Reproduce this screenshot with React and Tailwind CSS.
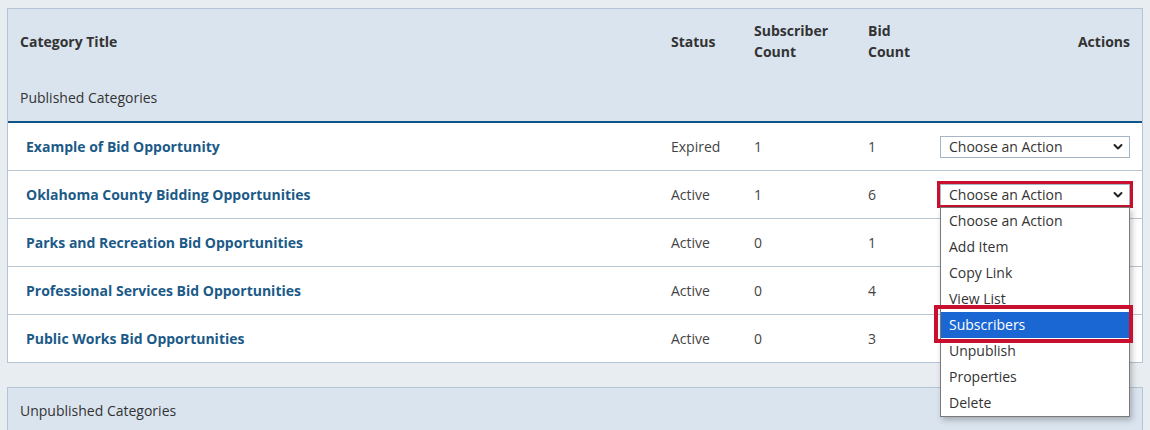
import { useState } from "react";

const rows = [
  { title: "Example of Bid Opportunity", status: "Expired", subs: 1, bids: 1 },
  { title: "Oklahoma County Bidding Opportunities", status: "Active", subs: 1, bids: 6, open: true },
  { title: "Parks and Recreation Bid Opportunities", status: "Active", subs: 0, bids: 1 },
  { title: "Professional Services Bid Opportunities", status: "Active", subs: 0, bids: 4 },
  { title: "Public Works Bid Opportunities", status: "Active", subs: 0, bids: 3 },
];

const actions = [
  "Choose an Action",
  "Add Item",
  "Copy Link",
  "View List",
  "Subscribers",
  "Unpublish",
  "Properties",
  "Delete",
];

const cols = "grid grid-cols-[663px_83px_114px_72px_1fr]";

function Chevron() {
  return (
    <svg width="10" height="8" viewBox="0 0 10 8" className="shrink-0">
      <path d="M1.5 2 L5 5.5 L8.5 2" fill="none" stroke="#222" strokeWidth="2" strokeLinecap="round" strokeLinejoin="round" />
    </svg>
  );
}

/* fake <select> so the open list can be drawn */
function ActionSelect({ open }) {
  const [hover] = useState("Subscribers");

  return (
    <div className="relative w-[190px]">
      {open && (
        <div className="pointer-events-none absolute -left-[3px] -right-[3px] -top-[3px] -bottom-[2px] border-[3px] border-[#c8102e]" />
      )}
      <div className="flex h-[22px] items-center justify-between border border-[#a7b6c7] bg-white pl-2 pr-[6px] text-[14px] text-[#333]">
        <span>Choose an Action</span>
        <Chevron />
      </div>

      {open && (
        <div className="absolute left-0 top-[23px] z-20 w-[190px] border border-[#7a7a7a] bg-white shadow-[2px_3px_6px_rgba(0,0,0,0.25)]">
          {actions.map((a) => (
            <div key={a} className="relative">
              <div
                className={
                  a === hover
                    ? "flex h-[26px] items-center bg-[#1a67d3] pl-2 text-[14px] text-white"
                    : "flex h-[26px] items-center pl-2 text-[14px] text-[#333]"
                }
              >
                {a}
              </div>
              {a === hover && (
                <div className="absolute -left-[7px] -right-[4px] -top-[7px] -bottom-[5px] border-4 border-[#c8102e]" />
              )}
            </div>
          ))}
        </div>
      )}
    </div>
  );
}

export default function App() {
  return (
    <div
      className="min-h-[430px] bg-[#e8edf2] px-[7px] pt-[8px]"
      style={{ fontFamily: '"Open Sans", "Noto Sans", sans-serif' }}
    >
      {/* published */}
      <div className="border border-[#b4c3d5] bg-white">
        <div className="bg-[#dae4ef] text-[14px] text-[#333]">
          <div className={`${cols} h-[64px] items-center font-bold leading-[21px]`}>
            <div className="pl-3">Category Title</div>
            <div>Status</div>
            <div>
              Subscriber
              <br />
              Count
            </div>
            <div>
              Bid
              <br />
              Count
            </div>
            <div className="pr-3 text-right">Actions</div>
          </div>
          <div className="flex h-[48px] items-center pl-3">Published Categories</div>
        </div>

        <div className="border-t-2 border-[#0f5587]">
          {rows.map((r, i) => (
            <div
              key={r.title}
              className={`${cols} h-[47px] items-center text-[14px] text-[#444] ${
                i < rows.length - 1 ? "box-content border-b border-[#b9c6d5]" : ""
              }`}
            >
              <div className="pl-[18px] font-bold text-[#1b5a87]">{r.title}</div>
              <div>{r.status}</div>
              <div>{r.subs}</div>
              <div>{r.bids}</div>
              <div className="flex justify-end pr-3">
                <ActionSelect open={r.open} />
              </div>
            </div>
          ))}
        </div>
      </div>

      {/* unpublished */}
      <div className="mt-[24px] border border-[#b4c3d5] bg-[#dae4ef]">
        <div className="flex h-[45px] items-center pl-3 text-[14px] text-[#333]">
          Unpublished Categories
        </div>
      </div>
    </div>
  );
}
